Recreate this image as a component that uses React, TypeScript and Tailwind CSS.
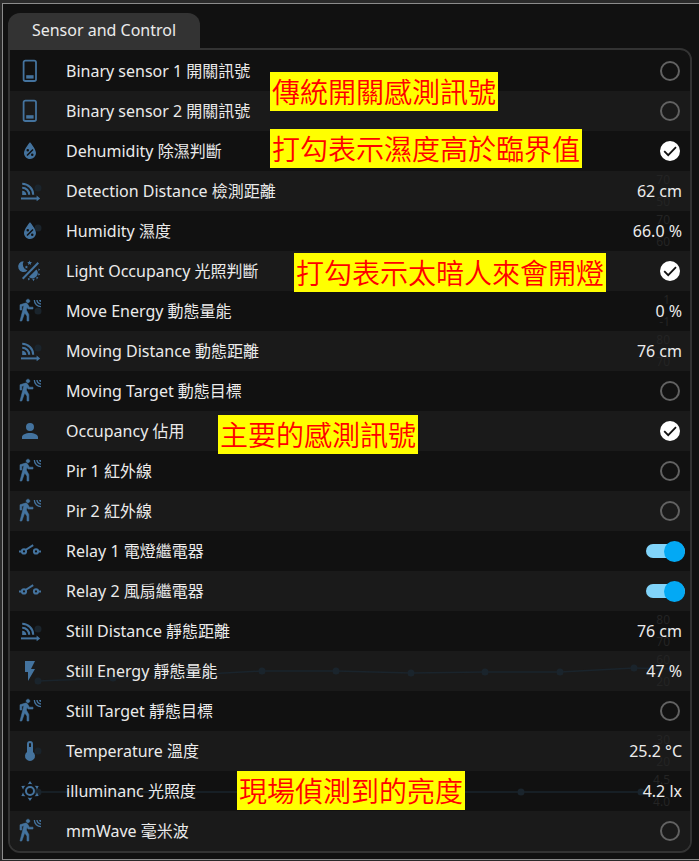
import React from "react";

type IconName =
  | "device"
  | "water"
  | "distance"
  | "dayNight"
  | "motion"
  | "account"
  | "relay"
  | "flash"
  | "thermometer"
  | "sunny";

type Graph = { high: string; low: string; line: [number, number][]; dots: [number, number][] };

type Entity = {
  id: string;
  name: string;
  icon: IconName;
  kind: "check" | "toggle" | "value";
  on?: boolean;
  value?: string;
  graph?: Graph;
  note?: { text: string; place: string };
};

const single = (high: string, low: string, y: number): Graph => ({ high, low, line: [], dots: [[28, y]] });

const entities: Entity[] = [
  { id: "binary-1", name: "Binary sensor 1 開關訊號", icon: "device", kind: "check", note: { text: "傳統開關感測訊號", place: "left-[260px] top-[21px]" } },
  { id: "binary-2", name: "Binary sensor 2 開關訊號", icon: "device", kind: "check" },
  { id: "dehumidity", name: "Dehumidity 除濕判斷", icon: "water", kind: "check", on: true, note: { text: "打勾表示濕度高於臨界值", place: "left-[260px] -top-[2px]" } },
  { id: "detection", name: "Detection Distance 檢測距離", icon: "distance", kind: "value", value: "62 cm", graph: single("70", "50", 17) },
  { id: "humidity", name: "Humidity 濕度", icon: "water", kind: "value", value: "66.0 %", graph: single("70", "60", 17) },
  { id: "light", name: "Light Occupancy 光照判斷", icon: "dayNight", kind: "check", on: true, note: { text: "打勾表示太暗人來會開燈", place: "left-[284px] top-[2px]" } },
  { id: "move-energy", name: "Move Energy 動態量能", icon: "motion", kind: "value", value: "0 %", graph: single("1", "-1", 20) },
  { id: "moving-distance", name: "Moving Distance 動態距離", icon: "distance", kind: "value", value: "76 cm", graph: single("80", "70", 17) },
  { id: "moving-target", name: "Moving Target 動態目標", icon: "motion", kind: "check" },
  { id: "occupancy", name: "Occupancy 佔用", icon: "account", kind: "check", on: true, note: { text: "主要的感測訊號", place: "left-[208px] top-1" } },
  { id: "pir-1", name: "Pir 1 紅外線", icon: "motion", kind: "check" },
  { id: "pir-2", name: "Pir 2 紅外線", icon: "motion", kind: "check" },
  { id: "relay-1", name: "Relay 1 電燈繼電器", icon: "relay", kind: "toggle", on: true },
  { id: "relay-2", name: "Relay 2 風扇繼電器", icon: "relay", kind: "toggle", on: true },
  { id: "still-distance", name: "Still Distance 靜態距離", icon: "distance", kind: "value", value: "76 cm", graph: single("80", "70", 18) },
  {
    id: "still-energy",
    name: "Still Energy 靜態量能",
    icon: "flash",
    kind: "value",
    value: "47 %",
    graph: {
      high: "60",
      low: "20",
      line: [[28, 30], [103, 27], [178, 24], [252, 20], [326, 20], [401, 22], [475, 21], [550, 21], [624, 17], [660, 18]],
      dots: [[28, 30], [103, 27], [252, 20], [326, 20], [401, 22], [475, 21], [550, 21], [624, 17]],
    },
  },
  { id: "still-target", name: "Still Target 靜態目標", icon: "motion", kind: "check" },
  { id: "temperature", name: "Temperature 溫度", icon: "thermometer", kind: "value", value: "25.2 °C", graph: single("30", "20", 20) },
  {
    id: "illuminance",
    name: "illuminanc 光照度",
    icon: "sunny",
    kind: "value",
    value: "4.2 lx",
    graph: { high: "4.5", low: "4.0", line: [[28, 21], [631, 21]], dots: [[28, 21], [511, 21], [631, 21]] },
    note: { text: "現場偵測到的亮度", place: "left-[227px] top-0" },
  },
  { id: "mmwave", name: "mmWave 毫米波", icon: "motion", kind: "check" },
];

const filled: Partial<Record<IconName, string>> = {
  water:
    "M12,3.25C12,3.25 6,10 6,14C6,17.32 8.69,20 12,20A6,6 0 0,0 18,14C18,10 12,3.25 12,3.25M14.47,9.97L15.53,11.03L9.53,17.03L8.47,15.97M9.75,10A1.25,1.25 0 0,1 11,11.25A1.25,1.25 0 0,1 9.75,12.5A1.25,1.25 0 0,1 8.5,11.25A1.25,1.25 0 0,1 9.75,10M14.25,14.5A1.25,1.25 0 0,1 15.5,15.75A1.25,1.25 0 0,1 14.25,17A1.25,1.25 0 0,1 13,15.75A1.25,1.25 0 0,1 14.25,14.5Z",
  account:
    "M12,4A4,4 0 0,1 16,8A4,4 0 0,1 12,12A4,4 0 0,1 8,8A4,4 0 0,1 12,4M12,14C16.42,14 20,15.79 20,18V20H4V18C4,15.79 7.58,14 12,14Z",
  flash: "M7,2V13H10V22L17,10H13L17,2H7Z",
  thermometer:
    "M15 13V5A3 3 0 0 0 9 5V13A5 5 0 1 0 15 13M12 4A1 1 0 0 1 13 5V8H11V5A1 1 0 0 1 12 4Z",
  sunny:
    "M12,7A5,5 0 0,1 17,12A5,5 0 0,1 12,17A5,5 0 0,1 7,12A5,5 0 0,1 12,7M12,9A3,3 0 0,0 9,12A3,3 0 0,0 12,15A3,3 0 0,0 15,12A3,3 0 0,0 12,9M12,2L14.39,5.42C13.65,5.15 12.84,5 12,5C11.16,5 10.35,5.15 9.61,5.42L12,2M3.34,7L7.5,6.65C6.9,7.16 6.36,7.78 5.94,8.5C5.5,9.24 5.25,10 5.11,10.79L3.34,7M3.36,17L5.12,13.23C5.26,14 5.53,14.78 5.95,15.5C6.37,16.24 6.91,16.86 7.5,17.37L3.36,17M20.65,7L18.88,10.79C18.74,10 18.47,9.23 18.05,8.5C17.63,7.78 17.1,7.15 16.5,6.64L20.65,7M20.64,17L16.5,17.36C17.09,16.85 17.62,16.22 18.04,15.5C18.46,14.77 18.73,14 18.87,13.21L20.64,17M12,22L9.59,18.56C10.33,18.83 11.14,19 12,19C12.82,19 13.63,18.83 14.37,18.56L12,22Z",
};

function EntityIcon({ name }: { name: IconName }) {
  const path = filled[name];
  return (
    <svg viewBox="0 0 24 24" aria-hidden="true" className="size-6 shrink-0 overflow-visible text-[#44739e]">
      {path && <path d={path} fill="currentColor" fillRule="evenodd" />}
      {name === "motion" && (
        <g fill="currentColor">
          <path
            d="M10,0.2C9,0.2 8.2,1 8.2,2C8.2,3 9,3.8 10,3.8C11,3.8 11.8,3 11.8,2C11.8,1 11,0.2 10,0.2M7.92,4.03C7.75,4.03 7.58,4.06 7.42,4.11L2,5.8V11H3.8V7.33L5.91,6.67L2,22H3.8L6.67,13.89L9,17V22H10.8V15.59L8.31,11.05L9.04,8.18L10.12,10H15V8.2H11.38L9.38,4.87C9.08,4.37 8.54,4.03 7.92,4.03Z"
            stroke="currentColor"
            strokeWidth="0.6"
          />
          <path d="M15.67,1A7.33,7.33 0 0,0 23,8.33V7A6,6 0 0,1 17,1H15.67M18.33,1C18.33,3.58 20.42,5.67 23,5.67V4.33C21.16,4.33 19.67,2.84 19.67,1H18.33M21,1A2,2 0 0,0 23,3V1H21Z" />
        </g>
      )}
      {name === "device" && (
        <>
          <rect x="5.6" y="1.6" width="12.4" height="20.4" rx="1.8" fill="none" stroke="currentColor" strokeWidth="1.8" />
          <rect x="8.2" y="16.2" width="7.4" height="3.4" fill="currentColor" />
        </>
      )}
      {name === "distance" && (
        <g fill="none" stroke="currentColor" strokeWidth="2.1">
          <path d="M4.2 4.8A11 11 0 0 1 15.2 15.8M4.2 8.8A7 7 0 0 1 11.2 15.8" />
          <path d="M4.2 11.8A4.2 4.2 0 0 1 8.4 16H4.2Z" fill="currentColor" stroke="none" />
          <path d="M3 19.4H20" strokeWidth="2" />
          <path d="M18.6 16.6L22.2 19.4L18.6 22.2Z" fill="currentColor" stroke="none" />
        </g>
      )}
      {name === "dayNight" && (
        <g fill="currentColor">
          <path d="M19.6 3L21 4.4L5.4 20.4L4 19Z" />
          <path d="M5.6 2.2A5.4 5.4 0 1 0 9.4 11.4A6.4 6.4 0 0 1 5.6 2.2Z" />
          <path d="M11.6 1.4L12.3 2.9L14 3.1L12.8 4.2L13.1 5.9L11.6 5.1L10.1 5.9L10.4 4.2L9.2 3.1L10.9 2.9Z" />
          <path d="M8.4 6.4L8.9 7.4L10 7.6L9.2 8.4L9.4 9.4L8.4 8.9L7.4 9.4L7.6 8.4L6.8 7.6L7.9 7.4Z" />
          <path d="M18.4 10.4A5.4 5.4 0 0 1 10.8 18Z" />
          <path d="M20.4 9.4L22.2 10.6L20.4 12ZM20.6 14L22.2 15.6L20 16.4ZM18.4 17.8L20.4 18.4L18.6 20.4ZM14.2 19.8L16.8 19.8L15.4 22.2ZM9.8 19L12.4 19.8L10.4 21.6Z" />
        </g>
      )}
      {name === "relay" && (
        <g fill="none" stroke="currentColor" strokeWidth="2">
          <circle cx="6" cy="12.4" r="2.1" />
          <circle cx="18" cy="12.4" r="2.1" />
          <path d="M1 12.4H4M20 12.4H23M7.5 11L15.2 6.2" />
        </g>
      )}
    </svg>
  );
}

function History({ graph }: { graph: Graph }) {
  const percent = (x: number) => `${(x / 680) * 100}%`;
  return (
    <div aria-hidden="true" className="pointer-events-none absolute inset-0">
      <svg className="h-full w-full text-[#1a242c]">
        {graph.line.slice(1).map(([x, y], i) => (
          <line
            key={x}
            x1={percent(graph.line[i][0])}
            y1={graph.line[i][1]}
            x2={percent(x)}
            y2={y}
            stroke="currentColor"
            strokeWidth="1.5"
          />
        ))}
        {graph.dots.map(([x, y]) => (
          <circle key={x} cx={percent(x)} cy={y} r="3.5" fill="currentColor" />
        ))}
      </svg>
      <div className="absolute inset-y-0 right-5 flex flex-col items-end justify-center gap-2 text-[12px] leading-[14px] text-[#242424]">
        <span>{graph.high}</span>
        <span>{graph.low}</span>
      </div>
    </div>
  );
}

function Control({ entity }: { entity: Entity }) {
  if (entity.kind === "value") {
    return <output id={entity.id} className="mr-2">{entity.value}</output>;
  }
  if (entity.kind === "toggle") {
    return (
      <input
        id={entity.id}
        type="checkbox"
        role="switch"
        defaultChecked={entity.on}
        className="mr-[5px] flex h-[14px] w-[39px] appearance-none items-center rounded-full bg-[#555] before:size-[21px] before:shrink-0 before:rounded-full before:bg-[#bbb] before:content-[''] checked:justify-end checked:bg-[#81d4fa] checked:before:bg-[#03a9f4]"
      />
    );
  }
  return (
    <span className="mr-[10px] grid">
      <input
        id={entity.id}
        type="checkbox"
        defaultChecked={entity.on}
        className="peer col-start-1 row-start-1 size-5 appearance-none rounded-full border-2 border-[#626262] checked:border-white checked:bg-white"
      />
      <svg
        viewBox="0 0 20 20"
        aria-hidden="true"
        className="pointer-events-none invisible col-start-1 row-start-1 size-5 peer-checked:visible"
      >
        <path d="M4.2 10.2L8.2 14.2L16 6.2" fill="none" stroke="#111" strokeWidth="1.8" />
      </svg>
    </span>
  );
}

export default function App() {
  return (
    <div className="min-h-screen bg-[#2a2a2a] pt-[3px] pl-[2px] font-['Noto_Sans','Noto_Sans_CJK_TC',sans-serif] text-[16px] leading-6 text-[#ebebeb]">
      <main className="border-y border-l border-[#8c8c8c] bg-[#111] pt-[9px] pr-[7px] pb-[6px] pl-[5px]">
        <h1 className="h-[35px] w-48 rounded-t-xl bg-[#333] text-center leading-[35px]">Sensor and Control</h1>
        <ul className="overflow-hidden rounded-b-xl rounded-tr-xl border-2 border-[#333] pt-px">
          {entities.map((entity) => (
            <li key={entity.id} className="relative flex h-10 items-center odd:bg-[#111] even:bg-[#1a1a1a]">
              {entity.graph && <History graph={entity.graph} />}
              <div className="relative flex w-full items-center pl-2">
                <EntityIcon name={entity.icon} />
                <label htmlFor={entity.id} className="ml-6 flex-1 whitespace-nowrap">
                  {entity.name}
                </label>
                <Control entity={entity} />
              </div>
              {entity.note && (
                <mark
                  className={`absolute z-10 bg-[#ffff00] px-[2px] font-['Noto_Sans_CJK_TC',sans-serif] text-[28px] leading-[39px] font-[350] whitespace-nowrap text-[#ff0000] ${entity.note.place}`}
                >
                  {entity.note.text}
                </mark>
              )}
            </li>
          ))}
        </ul>
      </main>
    </div>
  );
}
